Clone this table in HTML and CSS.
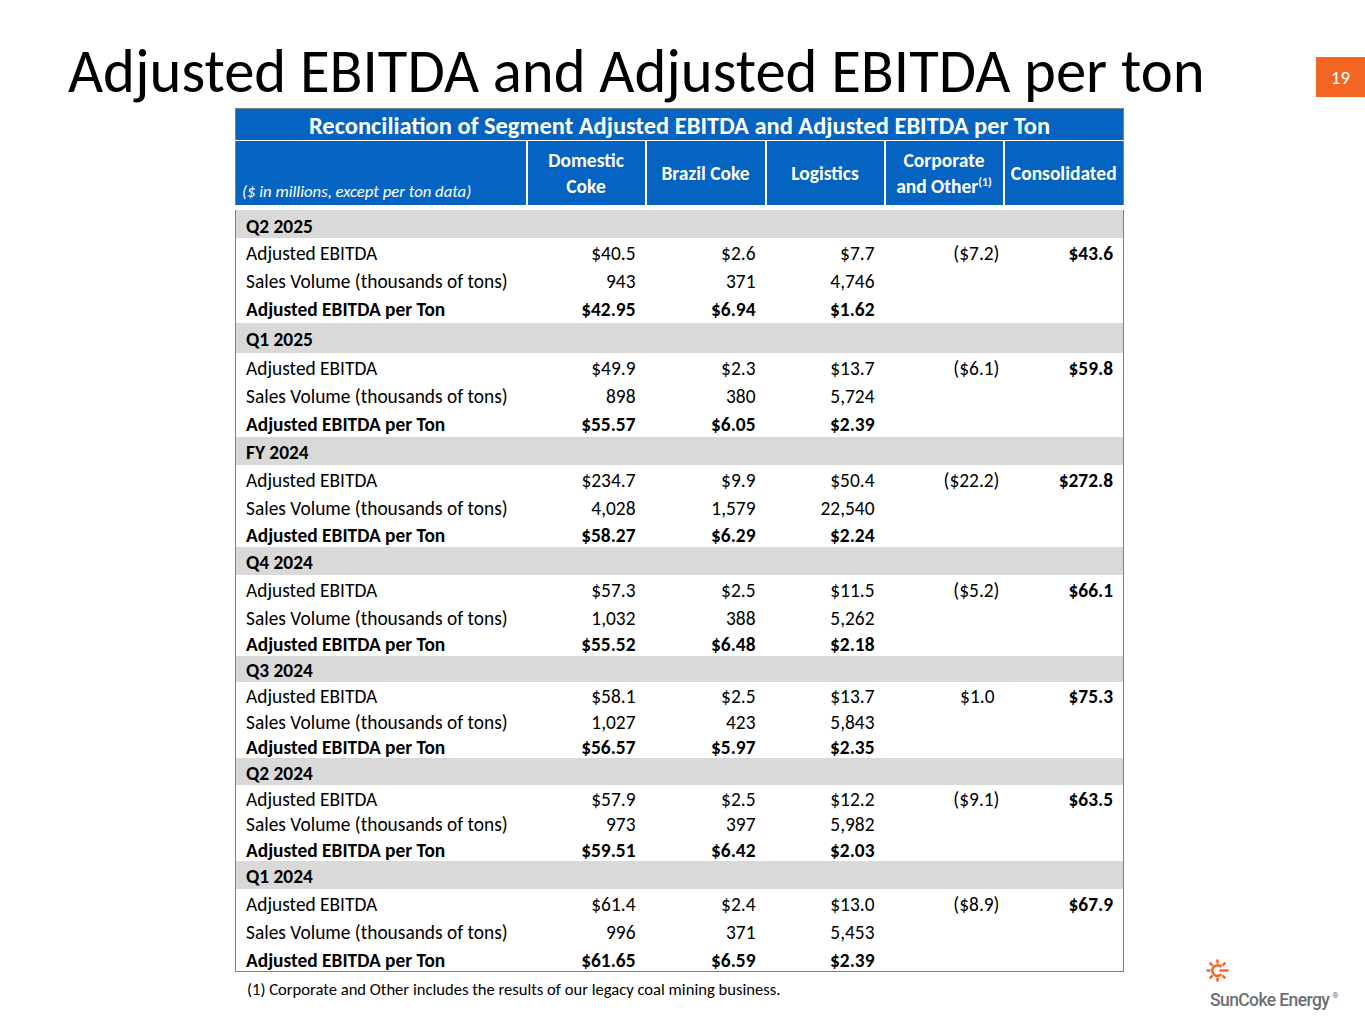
FILE: index.html
```html
<!DOCTYPE html>
<html lang="en">
<head>
<meta charset="utf-8">
<title>Adjusted EBITDA and Adjusted EBITDA per ton</title>
<link rel="stylesheet" href="styles.css">
</head>
<body>
<div class="slide">
  <header class="top">
    <h1 class="title">Adjusted EBITDA and Adjusted EBITDA per ton</h1>
    <div class="pagenum">19</div>
  </header>
  <div class="content">
    <div class="left">
      <table class="recon">
        <colgroup>
          <col class="c1"><col class="c2"><col class="c3"><col class="c4"><col class="c5"><col class="c6">
        </colgroup>
        <thead>
          <tr class="cap"><th colspan="6">Reconciliation of Segment Adjusted EBITDA and Adjusted EBITDA per Ton</th></tr>
          <tr class="colhead">
            <th class="unit">($ in millions, except per ton data)</th>
            <th>Domestic<br>Coke</th>
            <th>Brazil Coke</th>
            <th>Logistics</th>
            <th>Corporate<br>and Other<sup>(1)</sup></th>
            <th>Consolidated</th>
          </tr>
        </thead>
        <tbody>
          <tr class="band r30"><td colspan="6">Q2 2025</td></tr>
          <tr class="r28"><td class="lbl">Adjusted EBITDA</td><td>$40.5</td><td>$2.6</td><td>$7.7</td><td>($7.2)</td><td>$43.6</td></tr>
          <tr class="r27"><td class="lbl">Sales Volume (thousands of tons)</td><td>943</td><td>371</td><td>4,746</td><td></td><td></td></tr>
          <tr class="r30 bold"><td class="lbl">Adjusted EBITDA per Ton</td><td>$42.95</td><td>$6.94</td><td>$1.62</td><td></td><td></td></tr>

          <tr class="band r30"><td colspan="6">Q1 2025</td></tr>
          <tr class="r28"><td class="lbl">Adjusted EBITDA</td><td>$49.9</td><td>$2.3</td><td>$13.7</td><td>($6.1)</td><td>$59.8</td></tr>
          <tr class="r28"><td class="lbl">Sales Volume (thousands of tons)</td><td>898</td><td>380</td><td>5,724</td><td></td><td></td></tr>
          <tr class="r28 bold"><td class="lbl">Adjusted EBITDA per Ton</td><td>$55.57</td><td>$6.05</td><td>$2.39</td><td></td><td></td></tr>

          <tr class="band r28"><td colspan="6">FY 2024</td></tr>
          <tr class="r28"><td class="lbl">Adjusted EBITDA</td><td>$234.7</td><td>$9.9</td><td>$50.4</td><td>($22.2)</td><td>$272.8</td></tr>
          <tr class="r27"><td class="lbl">Sales Volume (thousands of tons)</td><td>4,028</td><td>1,579</td><td>22,540</td><td></td><td></td></tr>
          <tr class="r27 bold"><td class="lbl">Adjusted EBITDA per Ton</td><td>$58.27</td><td>$6.29</td><td>$2.24</td><td></td><td></td></tr>

          <tr class="band r28"><td colspan="6">Q4 2024</td></tr>
          <tr class="r28"><td class="lbl">Adjusted EBITDA</td><td>$57.3</td><td>$2.5</td><td>$11.5</td><td>($5.2)</td><td>$66.1</td></tr>
          <tr class="r27"><td class="lbl">Sales Volume (thousands of tons)</td><td>1,032</td><td>388</td><td>5,262</td><td></td><td></td></tr>
          <tr class="r26 bold"><td class="lbl">Adjusted EBITDA per Ton</td><td>$55.52</td><td>$6.48</td><td>$2.18</td><td></td><td></td></tr>

          <tr class="band r26"><td colspan="6">Q3 2024</td></tr>
          <tr class="r26"><td class="lbl">Adjusted EBITDA</td><td>$58.1</td><td>$2.5</td><td>$13.7</td><td class="pos">$1.0</td><td>$75.3</td></tr>
          <tr class="r25"><td class="lbl">Sales Volume (thousands of tons)</td><td>1,027</td><td>423</td><td>5,843</td><td></td><td></td></tr>
          <tr class="r25 bold"><td class="lbl">Adjusted EBITDA per Ton</td><td>$56.57</td><td>$5.97</td><td>$2.35</td><td></td><td></td></tr>

          <tr class="band r27"><td colspan="6">Q2 2024</td></tr>
          <tr class="r25"><td class="lbl">Adjusted EBITDA</td><td>$57.9</td><td>$2.5</td><td>$12.2</td><td>($9.1)</td><td>$63.5</td></tr>
          <tr class="r26"><td class="lbl">Sales Volume (thousands of tons)</td><td>973</td><td>397</td><td>5,982</td><td></td><td></td></tr>
          <tr class="r25 bold"><td class="lbl">Adjusted EBITDA per Ton</td><td>$59.51</td><td>$6.42</td><td>$2.03</td><td></td><td></td></tr>

          <tr class="band r28"><td colspan="6">Q1 2024</td></tr>
          <tr class="r28"><td class="lbl">Adjusted EBITDA</td><td>$61.4</td><td>$2.4</td><td>$13.0</td><td>($8.9)</td><td>$67.9</td></tr>
          <tr class="r28"><td class="lbl">Sales Volume (thousands of tons)</td><td>996</td><td>371</td><td>5,453</td><td></td><td></td></tr>
          <tr class="r27 bold"><td class="lbl">Adjusted EBITDA per Ton</td><td>$61.65</td><td>$6.59</td><td>$2.39</td><td></td><td></td></tr>
        </tbody>
      </table>
      <p class="note">(1) Corporate and Other includes the results of our legacy coal mining business.</p>
    </div>
    <aside class="brand">
      <div class="logo">
        <svg class="sun" viewBox="0 0 24 24" width="23" height="23" aria-hidden="true">
          <g stroke="#f26522" stroke-width="2.6" stroke-linecap="butt" fill="none">
            <path d="M16.2 8.2 A5.6 5.6 0 1 0 16.2 15.8"/>
            <line x1="12" y1="0.5" x2="12" y2="4.6"/>
            <line x1="12" y1="19.4" x2="12" y2="23.5"/>
            <line x1="0.5" y1="12" x2="4.6" y2="12"/>
            <line x1="14" y1="12" x2="23.5" y2="12"/>
            <line x1="3.9" y1="3.9" x2="6.8" y2="6.8"/>
            <line x1="20.1" y1="3.9" x2="17.2" y2="6.8"/>
            <line x1="3.9" y1="20.1" x2="6.8" y2="17.2"/>
            <line x1="20.1" y1="20.1" x2="17.2" y2="17.2"/>
          </g>
        </svg>
        <div class="wordmark">SunCoke Energy<span class="reg">®</span></div>
      </div>
    </aside>
  </div>
</div>
</body>
</html>
```

FILE: styles.css
```css
* { box-sizing: border-box; }
html, body { margin: 0; padding: 0; background: #fff; }
body {
  font-family: Carlito, "Lato", "Liberation Sans", sans-serif;
  color: #000;
}
.slide { width: 1365px; height: 1024px; overflow: hidden; position: relative; }

.top {
  display: flex;
  justify-content: space-between;
  align-items: flex-start;
  height: 108px;
}
.title {
  margin: 0;
  padding: 41px 0 0 68px;
  font-size: 60.7px;
  font-weight: 400;
  line-height: 1;
  white-space: nowrap;
}
.pagenum {
  margin-top: 57px;
  width: 49px;
  height: 40px;
  background: #f26522;
  color: #fff;
  font-size: 19px;
  display: flex;
  align-items: center;
  justify-content: center;
}

.content { display: flex; height: 916px; }
.left { margin-left: 235px; width: 888px; flex: none; }

.recon {
  border-collapse: collapse;
  table-layout: fixed;
  width: 888px;
  border: 1px solid #7f7f7f;
  font-size: 19.4px;
}
.c1 { width: 291px; }
.c2 { width: 119px; }
.c3 { width: 120px; }
.c4 { width: 119px; }
.c5 { width: 119px; }
.c6 { width: 120px; }

.cap th {
  background: #0563c1;
  color: #fff;
  font-size: 24.5px;
  font-weight: 700;
  height: 32px;
  padding: 3px 0 0 0;
  text-align: center;
  line-height: 1;
}
.colhead th {
  background: #0563c1;
  color: #fff;
  font-size: 19.5px;
  font-weight: 700;
  height: 67px;
  padding: 0;
  line-height: 26px;
  text-align: center;
  border-top: 1px solid #fff;
  border-bottom: 5px solid #fff;
}
.colhead th + th { border-left: 2px solid #fff; }
.colhead th.unit {
  text-align: left;
  vertical-align: bottom;
  font-style: italic;
  font-weight: 400;
  font-size: 16.7px;
  padding: 0 0 4px 6px;
  line-height: 20px;
}
.colhead sup { font-size: 12px; line-height: 0; vertical-align: 7px; }

.recon td {
  padding: 5px 10px 0 0;
  text-align: right;
  white-space: nowrap;
  vertical-align: middle;
  line-height: 1;
}
.recon td.lbl { text-align: left; padding-left: 10px; }
.recon td:nth-child(5) { padding-right: 4px; }
.recon td.pos { padding-right: 9px; }
.recon td:nth-child(6) { font-weight: 700; }
.recon tr.bold td { font-weight: 700; }
.recon tr.band td {
  background: #d9d9d9;
  font-weight: 700;
  text-align: left;
  padding-left: 10px;
}

.r25 { height: 25px; }
.r26 { height: 26px; }
.r27 { height: 27px; }
.r28 { height: 28px; }
.r29 { height: 29px; }
.r30 { height: 30px; }

.note {
  margin: 7px 0 0 0;
  padding-left: 12px;
  font-size: 16.6px;
  line-height: 20px;
}

.brand {
  flex: 1;
  display: flex;
  flex-direction: column;
  justify-content: flex-end;
  padding: 0 0 14px 83px;
}
.logo { display: flex; flex-direction: column; align-items: flex-start; }
.sun { display: block; margin-bottom: 4px; }
.wordmark {
  font-family: Roboto, "Liberation Sans", sans-serif;
  color: #6d6e71;
  font-size: 17.5px;
  font-weight: 500;
  letter-spacing: -0.6px;
  line-height: 20px;
  white-space: nowrap;
  margin-left: 4px;
}
.reg { font-size: 8px; vertical-align: 8px; margin-left: 3px; font-weight: 400; }
```
